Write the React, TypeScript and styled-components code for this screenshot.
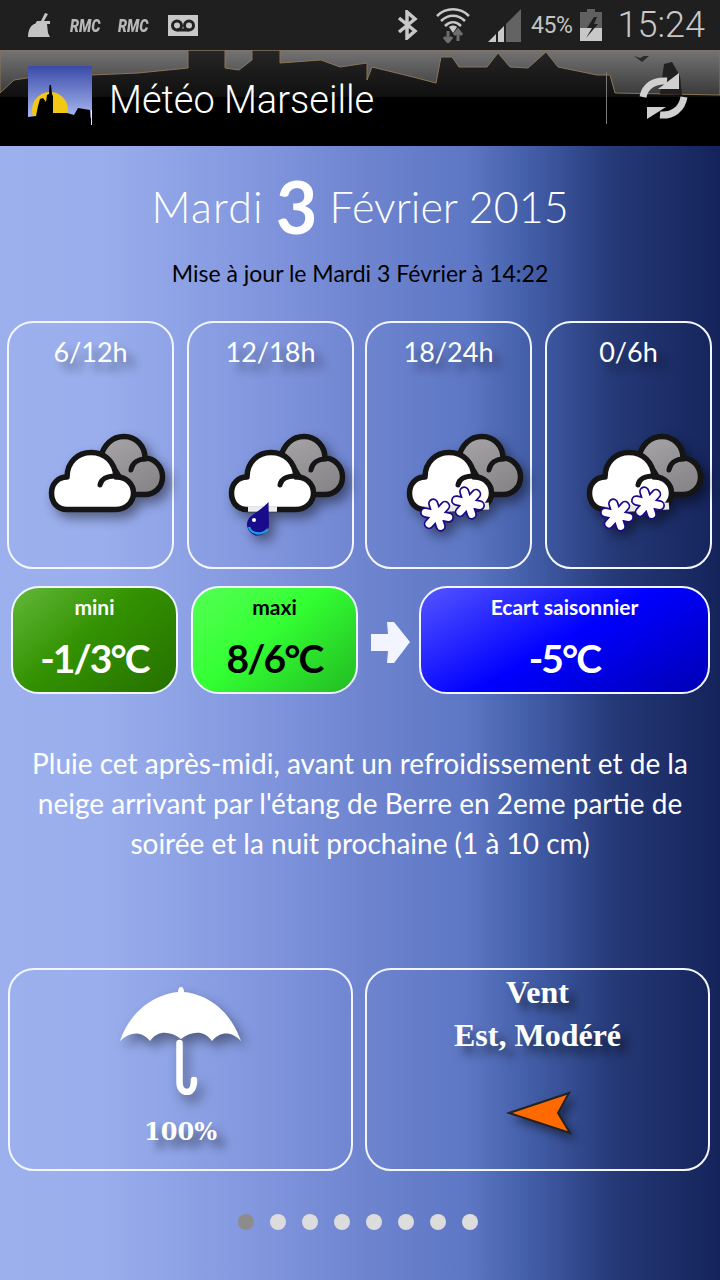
import React from "react";
import styled, { createGlobalStyle } from "styled-components";

const GlobalStyle = createGlobalStyle`
  html, body {
    margin: 0;
    padding: 0;
    background: #1f1f1f;
  }
  * {
    box-sizing: border-box;
  }
`;

const futura = `"Lato", "Noto Sans", sans-serif`;

const Screen = styled.div`
  width: 720px;
  height: 1280px;
  overflow: hidden;
  display: flex;
  flex-direction: column;
  font-family: ${futura};
`;

const StatusBar = styled.div`
  height: 50px;
  flex: none;
  background: #1f1f1f;
  display: flex;
  align-items: center;
  padding: 0 15px 0 28px;
  color: #c4c4c4;
`;

const StatusLeft = styled.div`
  display: flex;
  align-items: center;
`;

const StatusRight = styled.div`
  margin-left: auto;
  display: flex;
  align-items: center;
`;

const Rmc = styled.span<{ $ml: number }>`
  font: italic 900 18px "Roboto", sans-serif;
  color: #b8b8b8;
  transform: scaleX(0.8);
  transform-origin: left center;
  width: 33px;
  white-space: nowrap;
  margin-left: ${(p) => p.$ml}px;
`;

const Percent = styled.span`
  font: 400 23px "Roboto", sans-serif;
  letter-spacing: -0.4px;
  margin: 0 7px 0 10px;
`;

const Clock = styled.span`
  font: 300 36px "Roboto", sans-serif;
  margin-left: 16px;
  color: #c8c8c8;
`;

const ActionBar = styled.div`
  height: 96px;
  flex: none;
  position: relative;
  background: #000;
  display: flex;
  align-items: center;
  padding: 0 32px 0 28px;
`;

const Skyline = styled.svg`
  position: absolute;
  left: 0;
  top: 0;
  filter: blur(0.6px);
`;

const AppLogo = styled.svg`
  position: relative;
  flex: none;
  margin-top: -5px;
`;

const AppTitle = styled.h1`
  position: relative;
  margin: 4px 0 0 17px;
  font: 300 38px "Roboto", sans-serif;
  color: #fff;
`;

const ActionDivider = styled.div`
  position: relative;
  margin-left: auto;
  width: 1px;
  height: 52px;
  background: #777;
`;

const RefreshIcon = styled.svg`
  position: relative;
  margin-left: 33px;
  flex: none;
  overflow: visible;
  filter: blur(0.5px);
`;

const Page = styled.main`
  flex: 1;
  display: flex;
  flex-direction: column;
  background: linear-gradient(
    90deg,
    #9cb0ee 0%,
    #9aaeed 14%,
    #7f94dc 38%,
    #6f85d0 50%,
    #5d77c4 65%,
    #3f5aa3 75%,
    #263a78 85%,
    #14235a 100%
  );
`;

const DateTitle = styled.h2`
  margin: 24px 0 0;
  height: 72px;
  display: flex;
  align-items: center;
  justify-content: center;
  font-family: ${futura};
  font-weight: 300;
  font-size: 43px;
  color: #fff;
`;

const DateWord = styled.span<{ $ls: number }>`
  letter-spacing: ${(p) => p.$ls}px;
`;

const DateDay = styled.span`
  margin: 0 12px;
  font-size: 72px;
  font-weight: 700;
  line-height: 1;
`;

const Updated = styled.div`
  margin-top: 16px;
  height: 30px;
  line-height: 30px;
  text-align: center;
  font-size: 23px;
  color: #000;
`;

const TileRow = styled.div`
  margin-top: 33px;
  padding-left: 7px;
  display: flex;
  gap: 13px;
`;

const Tile = styled.div<{ $shift?: number }>`
  width: 167px;
  height: 248px;
  margin-left: ${(p) => p.$shift ?? 0}px;
  border: 2px solid #f4f6ff;
  border-radius: 26px;
  padding-top: 12px;
  display: flex;
  flex-direction: column;
`;

const TileLabel = styled.div`
  height: 34px;
  line-height: 34px;
  text-align: center;
  font-size: 27px;
  color: #fff;
  text-shadow: 8px 8px 9px rgba(0, 0, 0, 0.42);
`;

const WeatherSvg = styled.svg`
  margin: 61px 0 0 36px;
  overflow: visible;
  filter: drop-shadow(5px 6px 6px rgba(0, 0, 0, 0.45));
`;

const StatRow = styled.div`
  margin-top: 17px;
  padding-left: 11px;
  display: flex;
  align-items: center;
`;

const Stat = styled.div<{ $kind: "mini" | "maxi" | "gap" }>`
  width: ${(p) => (p.$kind === "gap" ? 291 : 167)}px;
  height: 108px;
  margin-left: ${(p) => (p.$kind === "maxi" ? 13 : 0)}px;
  border: 2px solid #f2f5ff;
  border-radius: 28px;
  display: flex;
  flex-direction: column;
  align-items: center;
  color: ${(p) => (p.$kind === "maxi" ? "#000" : "#fff")};
  background: ${(p) =>
    p.$kind === "mini"
      ? "linear-gradient(140deg, #62b83a 0%, #339200 45%, #257000 100%)"
      : p.$kind === "maxi"
        ? "linear-gradient(140deg, #55ff55 0%, #33ff33 45%, #22bb22 100%)"
        : "linear-gradient(150deg, #5555ff 0%, #0000ff 50%, #0000b4 100%)"};
`;

const StatLabel = styled.div`
  margin-top: 5px;
  height: 28px;
  line-height: 28px;
  font-size: 21px;
  font-weight: 700;
`;

const StatValue = styled.div`
  margin-top: 12px;
  height: 50px;
  line-height: 50px;
  font-size: 39px;
  font-weight: 700;
  letter-spacing: -1.9px;
`;

const ArrowIcon = styled.svg`
  margin: 4px 9px 0 13px;
  flex: none;
`;

const Forecast = styled.p`
  margin: 49px 0 0;
  padding: 0 20px;
  text-align: center;
  font-size: 28px;
  line-height: 40px;
  color: #fff;
`;

const CardRow = styled.div`
  margin-top: 105px;
  padding-left: 8px;
  display: flex;
  gap: 12px;
`;

const Card = styled.div`
  width: 345px;
  height: 203px;
  border: 2px solid #f4f6ff;
  border-radius: 26px;
  display: flex;
  flex-direction: column;
  align-items: center;
`;

const UmbrellaIcon = styled.svg`
  margin-top: 17px;
  filter: drop-shadow(5px 7px 6px rgba(0, 0, 0, 0.4));
`;

const Chance = styled.div`
  margin-top: 20px;
  font: 700 24px "DejaVu Serif", serif;
  color: #fff;
  line-height: 34px;
  text-shadow: 8px 8px 8px rgba(0, 0, 0, 0.45);
`;

const WindText = styled.div`
  margin-top: 1px;
  font: 700 32px/43px "Liberation Serif", serif;
  text-align: center;
  color: #fff;
  text-shadow: 8px 8px 8px rgba(0, 0, 0, 0.5);
`;

const WindArrow = styled.svg`
  margin: 35px 0 0 4px;
  overflow: visible;
  filter: drop-shadow(5px 6px 5px rgba(0, 0, 0, 0.45));
`;

const Dots = styled.div`
  margin-top: 43px;
  display: flex;
  justify-content: center;
  gap: 16px;
  padding-right: 4px;
`;

const Dot = styled.span<{ $active?: boolean }>`
  width: 16px;
  height: 16px;
  border-radius: 50%;
  background: ${(p) => (p.$active ? "#8c8c8c" : "#dcdcdc")};
`;

const FRONT =
  "M22 79.5C12 79.5 6.5 72 6.5 63C6.5 54 13 47 22 47C22 32 33 22.5 46 22.5C60 22.5 70 32 71 47C81 46.5 88.5 54 88.5 63C88.5 72 81 79.5 71 79.5Z";
const BACK =
  "M55 30C58 14 68 6.5 79 6.5C92 6.5 100 17 100 28C110 28 117.5 37 117.5 47C117.5 57 110 64.5 100 64.5L85 64.5L70 40Z";

const Flake = ({ x, y, rot }: { x: number; y: number; rot: number }) => {
  const arms = "M-12 0L12 0M-6 -10.4L6 10.4M-6 10.4L6 -10.4";
  return (
    <g transform={`translate(${x} ${y}) rotate(${rot})`}>
      <path d={arms} stroke="#1c0a8a" strokeWidth="10.5" strokeLinecap="round" />
      <path d={arms} stroke="#fff" strokeWidth="7" strokeLinecap="round" />
    </g>
  );
};

const Weather = ({ kind, id }: { kind: "cloud" | "rain" | "snow"; id: string }) => (
  <WeatherSvg width="125" height="110" viewBox="0 0 125 110">
    <defs>
      <linearGradient id={`grey-${id}`} x1="0.2" y1="0" x2="0.8" y2="1">
        <stop offset="0" stopColor="#a5a3a5" />
        <stop offset="1" stopColor="#858385" />
      </linearGradient>
    </defs>
    <path d={BACK} fill={`url(#grey-${id})`} stroke="#151515" strokeWidth="5.5" strokeLinejoin="round" />
    <path d="M86 40C87 33 93 29 101 29" fill="none" stroke="#151515" strokeWidth="5" strokeLinecap="round" />
    <path d={FRONT} fill="#fff" stroke="#151515" strokeWidth="5.5" strokeLinejoin="round" />
    <path d="M55 55C56 49 62 46 70 46" fill="none" stroke="#151515" strokeWidth="5" strokeLinecap="round" />
    {kind === "rain" && (
      <>
        <path d="M23 79L52 79" stroke="#ececec" strokeWidth="5.5" />
        <path d="M43.5 72L44 95A11 11 0 1 1 25 87C31 82 38 78 43.5 72Z" fill="#1a0a8c" />
        <path d="M24 97C26 104 37 106 43 99" fill="none" stroke="#1e9be0" strokeWidth="2.5" />
        <circle cx="29" cy="90" r="2" fill="#fff" />
      </>
    )}
    {kind === "snow" && (
      <>
        <path d="M22 79.5L86 76" stroke="#e8e8e8" strokeWidth="7" />
        <Flake x={34} y={85} rot={12} />
        <Flake x={65} y={73} rot={12} />
      </>
    )}
  </WeatherSvg>
);

const tiles = [
  { label: "6/12h", kind: "cloud", shift: 0 },
  { label: "12/18h", kind: "rain", shift: 0 },
  { label: "18/24h", kind: "snow", shift: -2 },
  { label: "0/6h", kind: "snow", shift: 0 },
] as const;

const App = () => {
  return (
    <Screen>
      <GlobalStyle />
      <StatusBar>
        <StatusLeft>
          <svg width="22" height="24" viewBox="0 0 22 24" fill="#c4c4c4">
            <path d="M17 0L20 1L16 8H22V11H19L20 20L22 24H0C0 18 2 13 6 11H7L9 8H13Z" />
          </svg>
          <Rmc $ml={20}>RMC</Rmc>
          <Rmc $ml={15}>RMC</Rmc>
          <svg width="30" height="21" viewBox="0 0 30 21" style={{ marginLeft: 17 }}>
            <rect width="30" height="21" fill="#c8c8c8" />
            <circle cx="9" cy="10.5" r="4.5" fill="none" stroke="#222" strokeWidth="3" />
            <circle cx="21" cy="10.5" r="4.5" fill="none" stroke="#222" strokeWidth="3" />
            <path d="M9 15H21" stroke="#222" strokeWidth="3" />
          </svg>
        </StatusLeft>
        <StatusRight>
          <svg width="21" height="30" viewBox="0 0 21 30" fill="none" stroke="#c8c8c8" strokeWidth="3.5">
            <path d="M2 8L18 21L10 28V2L18 9L2 22" />
          </svg>
          <svg width="34" height="36" viewBox="0 0 34 36" fill="none" stroke="#c8c8c8" strokeWidth="2.5" style={{ marginLeft: 18 }}>
            <path d="M1 9C10 0 24 0 33 9" />
            <path d="M5 14C12 7 22 7 29 14" />
            <path d="M9 19C14 14 20 14 25 19" />
            <path d="M17 26L13 20C15 18 19 18 21 20Z" fill="#c8c8c8" stroke="none" />
            <path d="M12 24V35M8 30L12 35L16 30" stroke="#6e6e6e" strokeWidth="3" />
            <path d="M22 34V23M18 28L22 23L26 28" stroke="#6e6e6e" strokeWidth="3" />
          </svg>
          <svg width="33" height="33" viewBox="0 0 33 33" style={{ marginLeft: 18 }}>
            <path d="M0 33L8 25V33Z" fill="#c8c8c8" />
            <path d="M10 23L16 17V33H10Z" fill="#c8c8c8" />
            <path d="M18 15L33 0V33H18Z" fill="#636363" />
          </svg>
          <Percent>45%</Percent>
          <svg width="22" height="32" viewBox="0 0 22 32">
            <path d="M7 0H15V3H22V32H0V3H7Z" fill="#606060" />
            <path d="M0 19H22V32H0Z" fill="#c8c8c8" />
            <path d="M17 8L14 8L7 19H12L6 29L18 15H14Z" fill="#1f1f1f" />
          </svg>
          <Clock>15:24</Clock>
        </StatusRight>
      </StatusBar>

      <ActionBar>
        <Skyline width="720" height="48" viewBox="0 0 720 48">
          <defs>
            <linearGradient id="sky" x1="0" y1="0" x2="0" y2="1">
              <stop offset="0" stopColor="#747474" />
              <stop offset="1" stopColor="#3a3a3a" />
            </linearGradient>
            <linearGradient id="town" x1="0" y1="0" x2="0" y2="1">
              <stop offset="0" stopColor="#262626" />
              <stop offset="1" stopColor="#101010" />
            </linearGradient>
          </defs>
          <rect width="720" height="47" fill="url(#town)" />
          <path
            d="M0 43L14 30L46 25L92 25L138 23L188 18V0H225V18L239 20L252 10V0H280V13L321 10L340 17L367 13V30L372 17L413 27L436 33L441 7H452L459 17L487 17L498 3L510 17L528 18L546 2L558 17L597 25L610 25L615 43L720 45V0H0Z"
            fill="url(#sky)"
            stroke="#8a7558"
            strokeWidth="1"
          />
          <path d="M660 44L664 14L672 12L680 26L682 45Z" fill="#202020" />
          <path d="M634 6L640 8L644 6L649 6L642 12L638 9Z" fill="#2a2a2a" />
        </Skyline>
        <AppLogo width="64" height="59" viewBox="0 0 64 59">
          <defs>
            <linearGradient id="logoSky" x1="0" y1="0" x2="0" y2="1">
              <stop offset="0" stopColor="#3a4aa8" />
              <stop offset="1" stopColor="#aabaf2" />
            </linearGradient>
          </defs>
          <rect width="64" height="52" fill="url(#logoSky)" />
          <circle cx="22" cy="44" r="18" fill="#f2c814" />
          <path d="M0 59V51L8 50L10 40L12 33L15 32L18 36L19 29L21 28L21.5 19H23L24 28L25 30V47L39 47L46 49L50 42L62 44L63 59Z" fill="#000" />
          <path d="M63 44H64V59H63Z" fill="#dfe6ff" />
        </AppLogo>
        <AppTitle>Météo Marseille</AppTitle>
        <ActionDivider />
        <RefreshIcon width="48" height="46" viewBox="0 0 48 46" fill="none" stroke="#d0d0d0" strokeWidth="7">
          <path d="M3 22C5 11 14 5 27 6" />
          <path d="M39 -2V14H18Z" fill="#d0d0d0" stroke="none" />
          <path d="M44 22C42 34 33 41 20 40" />
          <path d="M7 32V44L26 32Z" fill="#d0d0d0" stroke="none" />
        </RefreshIcon>
      </ActionBar>

      <Page>
        <DateTitle>
          <DateWord $ls={1.2}>Mardi</DateWord>
          <DateDay>3</DateDay>
          <DateWord $ls={0}>Février 2015</DateWord>
        </DateTitle>
        <Updated>Mise à jour le Mardi 3 Février à 14:22</Updated>

        <TileRow>
          {tiles.map((t, i) => (
            <Tile key={t.label} $shift={t.shift}>
              <TileLabel>{t.label}</TileLabel>
              <Weather kind={t.kind} id={String(i)} />
            </Tile>
          ))}
        </TileRow>

        <StatRow>
          <Stat $kind="mini">
            <StatLabel>mini</StatLabel>
            <StatValue>-1/3°C</StatValue>
          </Stat>
          <Stat $kind="maxi">
            <StatLabel>maxi</StatLabel>
            <StatValue>8/6°C</StatValue>
          </Stat>
          <ArrowIcon width="39" height="41" viewBox="0 0 39 41" fill="#f2f4ff">
            <path d="M0 12H17L16 0H23L39 20L23 41H16L17 29H0Z" />
          </ArrowIcon>
          <Stat $kind="gap">
            <StatLabel>Ecart saisonnier</StatLabel>
            <StatValue>-5°C</StatValue>
          </Stat>
        </StatRow>

        <Forecast>
          Pluie cet après-midi, avant un refroidissement et de la neige arrivant par
          l'étang de Berre en 2eme partie de soirée et la nuit prochaine (1 à 10 cm)
        </Forecast>

        <CardRow>
          <Card>
            <UmbrellaIcon width="122" height="108" viewBox="0 0 122 108" fill="#fff">
              <path d="M58 5C58 2 59 0 61 0C63 0 64 2 64 5C92 8 112 28 121 54C112 44 100 44 92 54C84 43 72 44 61 52C50 44 38 43 30 54C22 44 10 44 0 54C9 28 30 8 58 5Z" />
              <path d="M59.5 56V95C59.5 103 64 105 67 105C71 105 74 101 74 93" fill="none" stroke="#fff" strokeWidth="6.5" strokeLinecap="round" />
            </UmbrellaIcon>
            <Chance>100%</Chance>
          </Card>
          <Card>
            <WindText>
              Vent
              <br />
              Est, Modéré
            </WindText>
            <WindArrow width="63" height="42" viewBox="0 0 63 42">
              <path d="M1 21L61 1L50 21L62 41Z" fill="#ff6a00" stroke="#222" strokeWidth="2" strokeLinejoin="miter" />
            </WindArrow>
          </Card>
        </CardRow>

        <Dots>
          {[0, 1, 2, 3, 4, 5, 6, 7].map((n) => (
            <Dot key={n} $active={n === 0} />
          ))}
        </Dots>
      </Page>
    </Screen>
  );
};

export default App;
